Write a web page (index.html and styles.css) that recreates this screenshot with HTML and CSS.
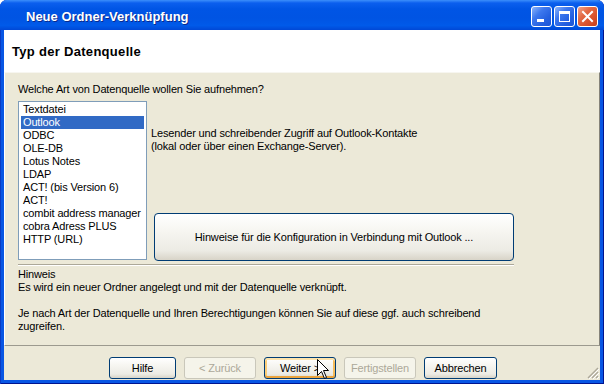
FILE: index.html
```html
<!DOCTYPE html>
<html lang="de">
  <head>
    <meta charset="UTF-8" />
    <title>Neue Ordner-Verknüpfung</title>
    <link rel="stylesheet" href="styles.css">
  </head>
  <body>
    <div class="window">
      <div class="titlebar">
        <span class="title">Neue Ordner-Verknüpfung</span>
        <div class="caption-buttons">
          <span class="cap-btn">
            <svg width="19" height="19" viewBox="0 0 19 19"><rect x="5" y="12" width="7" height="3" fill="#fff"/></svg>
          </span>
          <span class="cap-btn">
            <svg width="19" height="19" viewBox="0 0 19 19"><rect x="4.5" y="4.5" width="10" height="10" fill="none" stroke="#fff"/><rect x="4" y="4" width="11" height="3" fill="#fff"/></svg>
          </span>
          <span class="cap-btn close">
            <svg width="19" height="19" viewBox="0 0 19 19"><path d="M5 5 L14 14 M14 5 L5 14" stroke="#fff" stroke-width="2" stroke-linecap="square"/></svg>
          </span>
        </div>
      </div>

      <div class="client">
        <div class="wiz-header">Typ der Datenquelle</div>

        <div class="wiz-body">
          <p class="question">Welche Art von Datenquelle wollen Sie aufnehmen?</p>

          <div class="choice-row">
            <ul class="listbox">
              <li>Textdatei</li>
              <li class="selected">Outlook</li>
              <li>ODBC</li>
              <li>OLE-DB</li>
              <li>Lotus Notes</li>
              <li>LDAP</li>
              <li>ACT! (bis Version 6)</li>
              <li>ACT!</li>
              <li>combit address manager</li>
              <li>cobra Adress PLUS</li>
              <li>HTTP (URL)</li>
            </ul>
            <div class="detail">
              <p class="desc">Lesender und schreibender Zugriff auf Outlook-Kontakte<br>(lokal oder über einen Exchange-Server).</p>
              <button class="btn hint-btn">Hinweise für die Konfiguration in Verbindung mit Outlook ...</button>
            </div>
          </div>

          <div class="separator"></div>

          <div class="note">
            <p>Hinweis</p>
            <p>Es wird ein neuer Ordner angelegt und mit der Datenquelle verknüpft.</p>
            <p>&nbsp;</p>
            <p>Je nach Art der Datenquelle und Ihren Berechtigungen können Sie auf diese ggf. auch schreibend</p>
            <p>zugreifen.</p>
          </div>
        </div>

        <div class="wiz-footer">
          <button class="btn help">Hilfe</button>
          <button class="btn" disabled>&lt; Zurück</button>
          <button class="btn default">Weiter &gt;</button>
          <button class="btn" disabled>Fertigstellen</button>
          <button class="btn cancel">Abbrechen</button>
          <svg class="grip" width="12" height="12" viewBox="0 0 12 12">
            <path d="M11 1 L1 11 M11 5 L5 11 M11 9 L9 11" stroke="#aca899" stroke-width="1.4"/>
            <path d="M12 2 L2 12 M12 6 L6 12 M12 10 L10 12" stroke="#fff" stroke-width="1"/>
          </svg>
        </div>
      </div>

      <!-- mouse pointer resting on "Weiter" -->
      <svg class="pointer" width="13" height="21" viewBox="0 0 13 21">
        <path d="M0.5 0.5 L0.5 16.5 L4.5 12.5 L7.5 19.5 L9.5 18.5 L6.5 11.5 L11.5 11.5 Z" fill="#fff" stroke="#000" stroke-linejoin="miter"/>
      </svg>
    </div>
  </body>
</html>
```

FILE: styles.css
```css
* {
  box-sizing: border-box;
  margin: 0;
  padding: 0;
}

body {
  width: 604px;
  height: 384px;
  overflow: hidden;
  font-family: "Liberation Sans", Arial, sans-serif;
  font-size: 11px;
  letter-spacing: -0.15px;
  color: #000;
}

.window {
  position: relative;
  width: 604px;
  height: 384px;
  display: flex;
  flex-direction: column;
  background: #0856e4;
  border-radius: 7px 7px 0 0;
  box-shadow: inset 1px 0 #0a3bc4, inset -1px 0 #00148f, inset 0 -1px #00148f;
}

.titlebar {
  height: 30px;
  display: flex;
  align-items: center;
  padding: 3px 6px 0 26px;
  border-radius: 7px 7px 0 0;
  background: linear-gradient(to bottom, #3c8ffb 0%, #0b5fee 10%, #0055e5 30%, #0054e3 60%, #005ae9 85%, #0048d6 100%);
}

.title {
  flex: 1;
  color: #fff;
  font-weight: bold;
  font-size: 13px;
  letter-spacing: 0;
  text-shadow: 1px 1px #0b2a8c;
}

.caption-buttons {
  display: flex;
  gap: 2px;
}

.cap-btn {
  width: 21px;
  height: 21px;
  display: flex;
  align-items: center;
  justify-content: center;
  border: 1px solid #fff;
  border-radius: 3px;
  background: linear-gradient(135deg, #8cb4fb 0%, #3d78ee 35%, #2460e0 70%, #1b55d6 100%);
}

.cap-btn.close {
  background: linear-gradient(135deg, #f2a48a 0%, #e36a45 35%, #d8502b 70%, #c3401c 100%);
}

.client {
  flex: 1;
  margin: 0 4px 4px;
  display: flex;
  flex-direction: column;
  background: #ece9d8;
}

.wiz-header {
  height: 42px;
  display: flex;
  align-items: center;
  padding-left: 8px;
  background: #fff;
  font-weight: bold;
  font-size: 13px;
  letter-spacing: 0.3px;
}

.wiz-body {
  height: 274px;
  padding: 10px 0 0 13px;
  border: 1px solid;
  border-color: #f7f6f0 #85837a #9c9a8f #fff;
}

.question {
  line-height: 13px;
}

.choice-row {
  display: flex;
  height: 159px;
  margin-top: 5px;
}

.listbox {
  width: 129px;
  height: 159px;
  padding: 1px;
  list-style: none;
  background: #fff;
  border: 1px solid #7f9db9;
}

.listbox li {
  height: 13px;
  line-height: 13px;
  margin: 0 1px;
  padding-left: 2px;
  white-space: nowrap;
}

.listbox li.selected {
  background: #316ac5;
  color: #fff;
}

.detail {
  flex: 1;
  display: flex;
  flex-direction: column;
  margin-left: 4px;
}

.desc {
  margin-top: 26px;
  line-height: 13px;
}

.btn {
  width: 72px;
  height: 22px;
  font: inherit;
  letter-spacing: inherit;
  color: #000;
  border: 1px solid #003c74;
  border-radius: 3px;
  background: linear-gradient(to bottom, #ffffff 0%, #f6f5f0 40%, #ecebe4 80%, #d8d4c8 100%);
}

.btn:disabled {
  color: #aca899;
  border-color: #c9c7ba;
  background: #f5f4ea;
}

.btn.default {
  box-shadow: inset 0 2px #fde4ad, inset 0 -2px #eaa43e, inset 2px 0 #fbcd78, inset -2px 0 #f6bd5c;
}

.hint-btn {
  width: 360px;
  height: 48px;
  margin: auto 0 -1px 3px;
  border-radius: 4px;
}

.separator {
  width: 496px;
  margin-top: 4px;
  border-top: 1px solid #aca899;
  border-bottom: 1px solid #fff;
}

.note {
  margin-top: 2px;
  line-height: 13px;
}

.wiz-footer {
  position: relative;
  flex: 1;
  display: flex;
  align-items: flex-start;
  gap: 8px;
  padding: 11px 0 0 105px;
}

.btn.help {
  width: 67px;
}

.btn.cancel {
  width: 73px;
}

.grip {
  position: absolute;
  right: 1px;
  bottom: 1px;
}

.pointer {
  position: absolute;
  left: 317px;
  top: 359px;
}
```
